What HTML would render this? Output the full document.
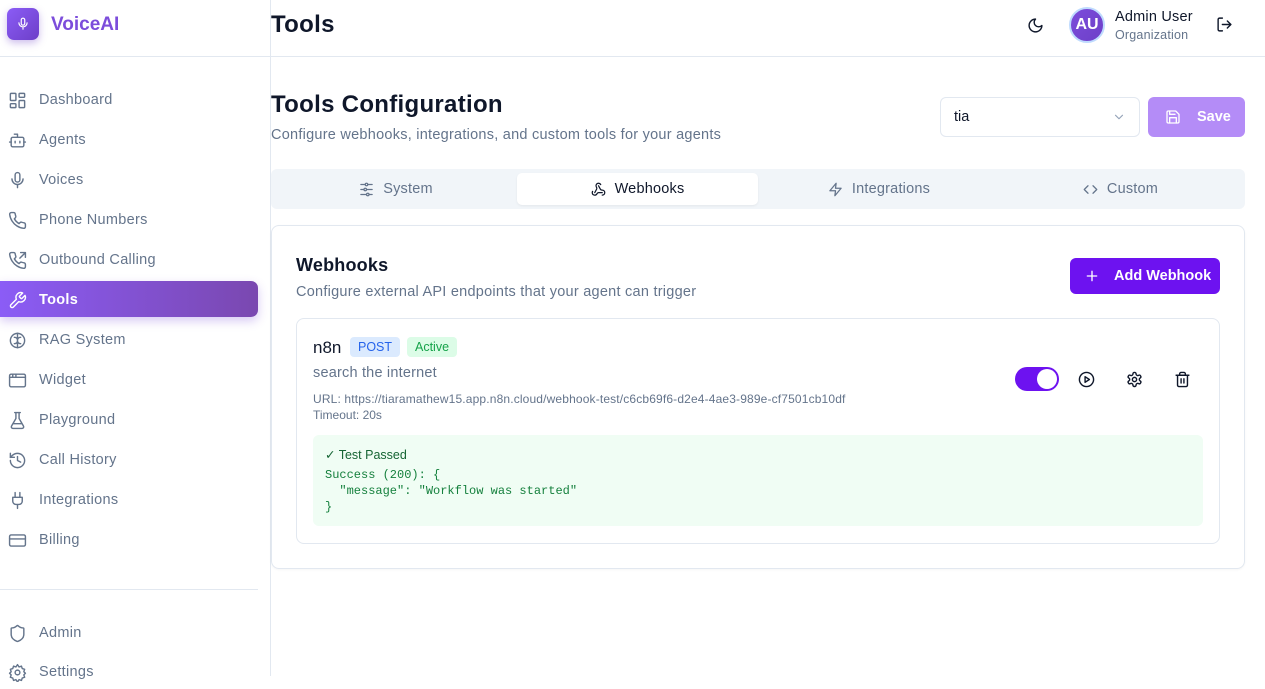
<!DOCTYPE html>
<html><head><meta charset="utf-8"><style>
*{box-sizing:border-box;margin:0;padding:0}
body{width:1265px;height:676px;overflow:hidden;background:#fff;font-family:"Liberation Sans",sans-serif;position:relative;color:#0f172a}
.a{position:absolute}
.side{left:0;top:0;width:271px;height:676px;border-right:1px solid #e2e8f0;background:#fff}
.nav{left:8px;width:250px;height:36px;display:flex;align-items:center;font-size:14.5px;color:#64748b;letter-spacing:.3px;padding-top:2px}
.nav svg{width:19px;height:19px;margin:0 12px 0 0;fill:none;stroke:#64748b;stroke-width:1.8;stroke-linecap:round;stroke-linejoin:round}
.ic{fill:none;stroke-width:2;stroke-linecap:round;stroke-linejoin:round}
.tab{top:173px;height:32px;display:flex;align-items:center;justify-content:center;font-size:14.5px;color:#64748b;letter-spacing:.2px}
.tab svg{width:15px;height:15px;margin-right:9px}
</style></head><body>
<div class="a side"></div>
<div class="a" style="left:7px;top:8px;width:32px;height:32px;border-radius:7px;background:linear-gradient(135deg,#8b5cf6,#6d3fc8);box-shadow:0 3px 8px rgba(109,63,200,.35)">
<svg class="ic" viewBox="0 0 24 24" style="width:14px;height:14px;margin:9px" stroke="#fff"><rect x="9" y="2" width="6" height="12" rx="3"/><path d="M5 10a7 7 0 0 0 14 0M12 17v4"/></svg></div>
<div class="a" style="left:51px;top:14px;font-size:19px;font-weight:bold;color:#7c4ddb">VoiceAI</div>
<div class="a" style="left:0;top:56px;width:270px;height:1px;background:#e2e8f0"></div>

<div class="a nav" style="top:81px"><svg viewBox="0 0 24 24"><rect x="3" y="3" width="7" height="9" rx="1"/><rect x="14" y="3" width="7" height="5" rx="1"/><rect x="14" y="12" width="7" height="9" rx="1"/><rect x="3" y="16" width="7" height="5" rx="1"/></svg>Dashboard</div>
<div class="a nav" style="top:121px"><svg viewBox="0 0 24 24"><path d="M12 8V4H8"/><rect x="4" y="8" width="16" height="12" rx="2"/><path d="M2 14h2M20 14h2M15 13v2M9 13v2"/></svg>Agents</div>
<div class="a nav" style="top:161px"><svg viewBox="0 0 24 24"><rect x="9" y="2" width="6" height="12" rx="3"/><path d="M5 10a7 7 0 0 0 14 0M12 17v4"/></svg>Voices</div>
<div class="a nav" style="top:201px"><svg viewBox="0 0 24 24"><path d="M22 16.9v3a2 2 0 0 1-2.2 2 19.8 19.8 0 0 1-8.6-3.1 19.5 19.5 0 0 1-6-6A19.8 19.8 0 0 1 2.1 4.2 2 2 0 0 1 4.1 2h3a2 2 0 0 1 2 1.7c.1 1 .4 1.9.7 2.8a2 2 0 0 1-.5 2.1L8 9.9a16 16 0 0 0 6 6l1.3-1.3a2 2 0 0 1 2.1-.4c.9.3 1.8.6 2.8.7a2 2 0 0 1 1.7 2z"/></svg>Phone Numbers</div>
<div class="a nav" style="top:241px"><svg viewBox="0 0 24 24"><path d="M16 2h6v6M15 9l7-7"/><path d="M22 16.9v3a2 2 0 0 1-2.2 2 19.8 19.8 0 0 1-8.6-3.1 19.5 19.5 0 0 1-6-6A19.8 19.8 0 0 1 2.1 4.2 2 2 0 0 1 4.1 2h3a2 2 0 0 1 2 1.7c.1 1 .4 1.9.7 2.8a2 2 0 0 1-.5 2.1L8 9.9a16 16 0 0 0 6 6l1.3-1.3a2 2 0 0 1 2.1-.4c.9.3 1.8.6 2.8.7a2 2 0 0 1 1.7 2z"/></svg>Outbound Calling</div>
<div class="a" style="left:0;top:281px;width:258px;height:36px;border-radius:0 7px 7px 0;background:linear-gradient(90deg,#8b5cf6,#7a48b0);box-shadow:0 4px 10px rgba(124,77,219,.3)"></div>
<div class="a nav" style="top:281px;color:#fff;font-weight:bold"><svg viewBox="0 0 24 24" style="stroke:#fff"><path d="M14.7 6.3a1 1 0 0 0 0 1.4l1.6 1.6a1 1 0 0 0 1.4 0l3.8-3.8a6 6 0 0 1-7.9 7.9l-6.9 6.9a2.1 2.1 0 0 1-3-3l6.9-6.9a6 6 0 0 1 7.9-7.9z"/></svg>Tools</div>
<div class="a nav" style="top:321px"><svg viewBox="0 0 24 24"><circle cx="12" cy="12" r="9"/><path d="M12 3v18M8 8c2 0 4 1 4 4M16 8c-2 0-4 1-4 4M8 16c2 0 4-1 4-4M16 16c-2 0-4-1-4-4"/></svg>RAG System</div>
<div class="a nav" style="top:361px"><svg viewBox="0 0 24 24"><rect x="2" y="4" width="20" height="16" rx="2"/><path d="M2 8h20M6 4v4M10 4v4"/></svg>Widget</div>
<div class="a nav" style="top:401px"><svg viewBox="0 0 24 24"><path d="M10 2v7.5L4.5 19A2 2 0 0 0 6.2 22h11.6a2 2 0 0 0 1.7-3L14 9.5V2M8.5 2h7M7 16h10"/></svg>Playground</div>
<div class="a nav" style="top:441px"><svg viewBox="0 0 24 24"><path d="M3 12a9 9 0 1 0 9-9 9.7 9.7 0 0 0-6.7 2.7L3 8"/><path d="M3 3v5h5M12 7v5l4 2"/></svg>Call History</div>
<div class="a nav" style="top:481px"><svg viewBox="0 0 24 24"><path d="M12 22v-5M9 8V2M15 8V2M18 8v5a4 4 0 0 1-4 4h-4a4 4 0 0 1-4-4V8z"/></svg>Integrations</div>
<div class="a nav" style="top:521px"><svg viewBox="0 0 24 24"><rect x="2" y="5" width="20" height="14" rx="2"/><path d="M2 10h20"/></svg>Billing</div>
<div class="a" style="left:0;top:589px;width:258px;height:1px;background:#e2e8f0"></div>
<div class="a nav" style="top:614px"><svg viewBox="0 0 24 24"><path d="M20 13c0 5-3.5 7.5-7.7 9a1 1 0 0 1-.7 0C7.5 20.5 4 18 4 13V6a1 1 0 0 1 1-1c2 0 4.5-1.2 6.2-2.7a1.2 1.2 0 0 1 1.6 0C14.5 3.8 17 5 19 5a1 1 0 0 1 1 1z"/></svg>Admin</div>
<div class="a nav" style="top:653px"><svg viewBox="0 0 24 24"><circle cx="12" cy="12" r="3"/><path d="M12 2l2 3 3-1 1 3 3 1-1 3 2 2-2 2 1 3-3 1-1 3-3-1-2 3-2-3-3 1-1-3-3-1 1-3-2-2 2-2-1-3 3-1 1-3 3 1z"/></svg>Settings</div>

<div class="a" style="left:271px;top:56px;width:994px;height:1px;background:#e2e8f0"></div>
<div class="a" style="left:271px;top:11px;font-size:24px;font-weight:bold;color:#0f172a;letter-spacing:.3px">Tools</div>
<svg class="a ic" viewBox="0 0 24 24" style="left:1027px;top:17px;width:17px;height:17px" stroke="#0f172a"><path d="M12 3a6 6 0 0 0 9 9 9 9 0 1 1-9-9z"/></svg>
<div class="a" style="left:1069px;top:7px;width:36px;height:36px;border-radius:50%;background:linear-gradient(135deg,#7c4ddb,#6d3fc8);border:2px solid #bfdbfe;color:#fff;font-weight:bold;font-size:16px;display:flex;align-items:center;justify-content:center">AU</div>
<div class="a" style="left:1115px;top:9px;font-size:14.5px;color:#0f172a;letter-spacing:.2px">Admin User</div>
<div class="a" style="left:1115px;top:28px;font-size:12.5px;color:#64748b;letter-spacing:.2px">Organization</div>
<svg class="a ic" viewBox="0 0 24 24" style="left:1216px;top:16px;width:17px;height:17px" stroke="#0f172a"><path d="M9 21H5a2 2 0 0 1-2-2V5a2 2 0 0 1 2-2h4M16 17l5-5-5-5M21 12H9"/></svg>

<div class="a" style="left:271px;top:91px;font-size:24px;font-weight:bold;letter-spacing:.3px">Tools Configuration</div>
<div class="a" style="left:271px;top:127px;font-size:14.5px;color:#64748b;letter-spacing:.25px">Configure webhooks, integrations, and custom tools for your agents</div>
<div class="a" style="left:940px;top:97px;width:200px;height:40px;border:1px solid #e2e8f0;border-radius:6px;font-size:14.5px;padding:11px 13px">tia</div>
<svg class="a ic" viewBox="0 0 24 24" style="left:1112px;top:110px;width:14px;height:14px" stroke="#94a3b8"><path d="M6 9l6 6 6-6"/></svg>
<div class="a" style="left:1148px;top:97px;width:97px;height:40px;border-radius:6px;background:#b48cf7;color:#fff;font-weight:bold;font-size:14.5px;display:flex;align-items:center;padding-left:17px"><svg class="ic" viewBox="0 0 24 24" style="width:16px;height:16px;margin-right:16px" stroke="#fff"><path d="M19 21H5a2 2 0 0 1-2-2V5a2 2 0 0 1 2-2h11l5 5v11a2 2 0 0 1-2 2z"/><path d="M17 21v-8H7v8M7 3v5h8"/></svg>Save</div>

<div class="a" style="left:271px;top:169px;width:974px;height:40px;border-radius:6px;background:#f1f5f9"></div>
<div class="a" style="left:517px;top:173px;width:241px;height:32px;border-radius:5px;background:#fff;box-shadow:0 1px 2px rgba(0,0,0,.06)"></div>
<div class="a tab" style="left:275px;width:242px"><svg class="ic" viewBox="0 0 24 24" stroke="#64748b"><path d="M21 4h-7M10 4H3M21 12h-9M8 12H3M21 20h-5M12 20H3"/><circle cx="12" cy="4" r="2"/><circle cx="10" cy="12" r="2"/><circle cx="14" cy="20" r="2"/></svg>System</div>
<div class="a tab" style="left:517px;width:241px;color:#0f172a"><svg class="ic" viewBox="0 0 24 24" stroke="#0f172a"><path d="M18 16.98h-5.99c-1.1 0-1.95.94-2.48 1.9A4 4 0 0 1 2 17c.01-.7.2-1.4.57-2M6 17l3.13-5.78c.53-.97.1-2.18-.5-3.1a4 4 0 1 1 6.89-4.06M12 6l3.13 5.73C15.66 12.7 16.9 13 18 13a4 4 0 0 1 0 8"/></svg>Webhooks</div>
<div class="a tab" style="left:758px;width:242px"><svg class="ic" viewBox="0 0 24 24" stroke="#64748b"><path d="M13 2L3 14h9l-1 8 10-12h-9z"/></svg>Integrations</div>
<div class="a tab" style="left:1000px;width:241px"><svg class="ic" viewBox="0 0 24 24" stroke="#64748b"><path d="M16 18l6-6-6-6M8 6l-6 6 6 6"/></svg>Custom</div>

<div class="a" style="left:271px;top:225px;width:974px;height:344px;border:1px solid #e2e8f0;border-radius:8px;box-shadow:0 1px 2px rgba(0,0,0,.04)"></div>
<div class="a" style="left:296px;top:255px;font-size:18px;font-weight:bold;letter-spacing:.2px">Webhooks</div>
<div class="a" style="left:296px;top:284px;font-size:14.5px;color:#64748b;letter-spacing:.25px">Configure external API endpoints that your agent can trigger</div>
<div class="a" style="left:1070px;top:258px;width:150px;height:36px;border-radius:6px;background:#6d12f0;color:#fff;font-weight:bold;font-size:14.5px;display:flex;align-items:center;padding-left:14px"><svg class="ic" viewBox="0 0 24 24" style="width:16px;height:16px;margin-right:14px" stroke="#fff"><path d="M12 5v14M5 12h14"/></svg>Add Webhook</div>

<div class="a" style="left:296px;top:318px;width:924px;height:226px;border:1px solid #e2e8f0;border-radius:8px"></div>
<div class="a" style="left:313px;top:338px;font-size:17px">n8n</div>
<div class="a" style="left:350px;top:337px;height:20px;padding:0 8px;border-radius:4px;background:#dbeafe;color:#2563eb;font-size:12.5px;line-height:20px">POST</div>
<div class="a" style="left:407px;top:337px;height:20px;padding:0 8px;border-radius:4px;background:#dcfce7;color:#16a34a;font-size:12.5px;line-height:20px">Active</div>
<div class="a" style="left:313px;top:365px;font-size:14.5px;color:#64748b;letter-spacing:.2px">search the internet</div>
<div class="a" style="left:313px;top:392px;font-size:12px;color:#64748b;letter-spacing:.15px">URL: https://tiaramathew15.app.n8n.cloud/webhook-test/c6cb69f6-d2e4-4ae3-989e-cf7501cb10df</div>
<div class="a" style="left:313px;top:408px;font-size:12px;color:#64748b">Timeout: 20s</div>
<div class="a" style="left:1015px;top:367px;width:44px;height:24px;border-radius:12px;background:#6d12f0"><div style="position:absolute;right:2px;top:2px;width:20px;height:20px;border-radius:50%;background:#fff"></div></div>
<svg class="a ic" viewBox="0 0 24 24" style="left:1078px;top:371px;width:17px;height:17px" stroke="#0f172a"><circle cx="12" cy="12" r="10"/><path d="M10 8l6 4-6 4z"/></svg>
<svg class="a ic" viewBox="0 0 24 24" style="left:1126px;top:371px;width:17px;height:17px" stroke="#0f172a"><circle cx="12" cy="12" r="3"/><path d="M12.2 2h-.4a2 2 0 0 0-2 2v.2a2 2 0 0 1-1 1.7l-.4.3a2 2 0 0 1-2 0l-.2-.1a2 2 0 0 0-2.7.7l-.2.4a2 2 0 0 0 .7 2.7l.2.1a2 2 0 0 1 1 1.7v.5a2 2 0 0 1-1 1.7l-.2.1a2 2 0 0 0-.7 2.7l.2.4a2 2 0 0 0 2.7.7l.2-.1a2 2 0 0 1 2 0l.4.3a2 2 0 0 1 1 1.7v.2a2 2 0 0 0 2 2h.4a2 2 0 0 0 2-2v-.2a2 2 0 0 1 1-1.7l.4-.3a2 2 0 0 1 2 0l.2.1a2 2 0 0 0 2.7-.7l.2-.4a2 2 0 0 0-.7-2.7l-.2-.1a2 2 0 0 1-1-1.7v-.5a2 2 0 0 1 1-1.7l.2-.1a2 2 0 0 0 .7-2.7l-.2-.4a2 2 0 0 0-2.7-.7l-.2.1a2 2 0 0 1-2 0l-.4-.3a2 2 0 0 1-1-1.7V4a2 2 0 0 0-2-2z"/></svg>
<svg class="a ic" viewBox="0 0 24 24" style="left:1174px;top:371px;width:17px;height:17px" stroke="#0f172a"><path d="M3 6h18M19 6v14a2 2 0 0 1-2 2H7a2 2 0 0 1-2-2V6M8 6V4a2 2 0 0 1 2-2h4a2 2 0 0 1 2 2v2M10 11v6M14 11v6"/></svg>

<div class="a" style="left:313px;top:435px;width:890px;height:91px;border-radius:6px;background:#f0fdf4"></div>
<div class="a" style="left:325px;top:447px;font-size:12.5px;color:#166534">✓ Test Passed</div>
<pre class="a" style="left:325px;top:467px;font-family:'Liberation Mono',monospace;font-size:12px;line-height:16px;color:#15803d">Success (200): {
  "message": "Workflow was started"
}</pre>
</body></html>
